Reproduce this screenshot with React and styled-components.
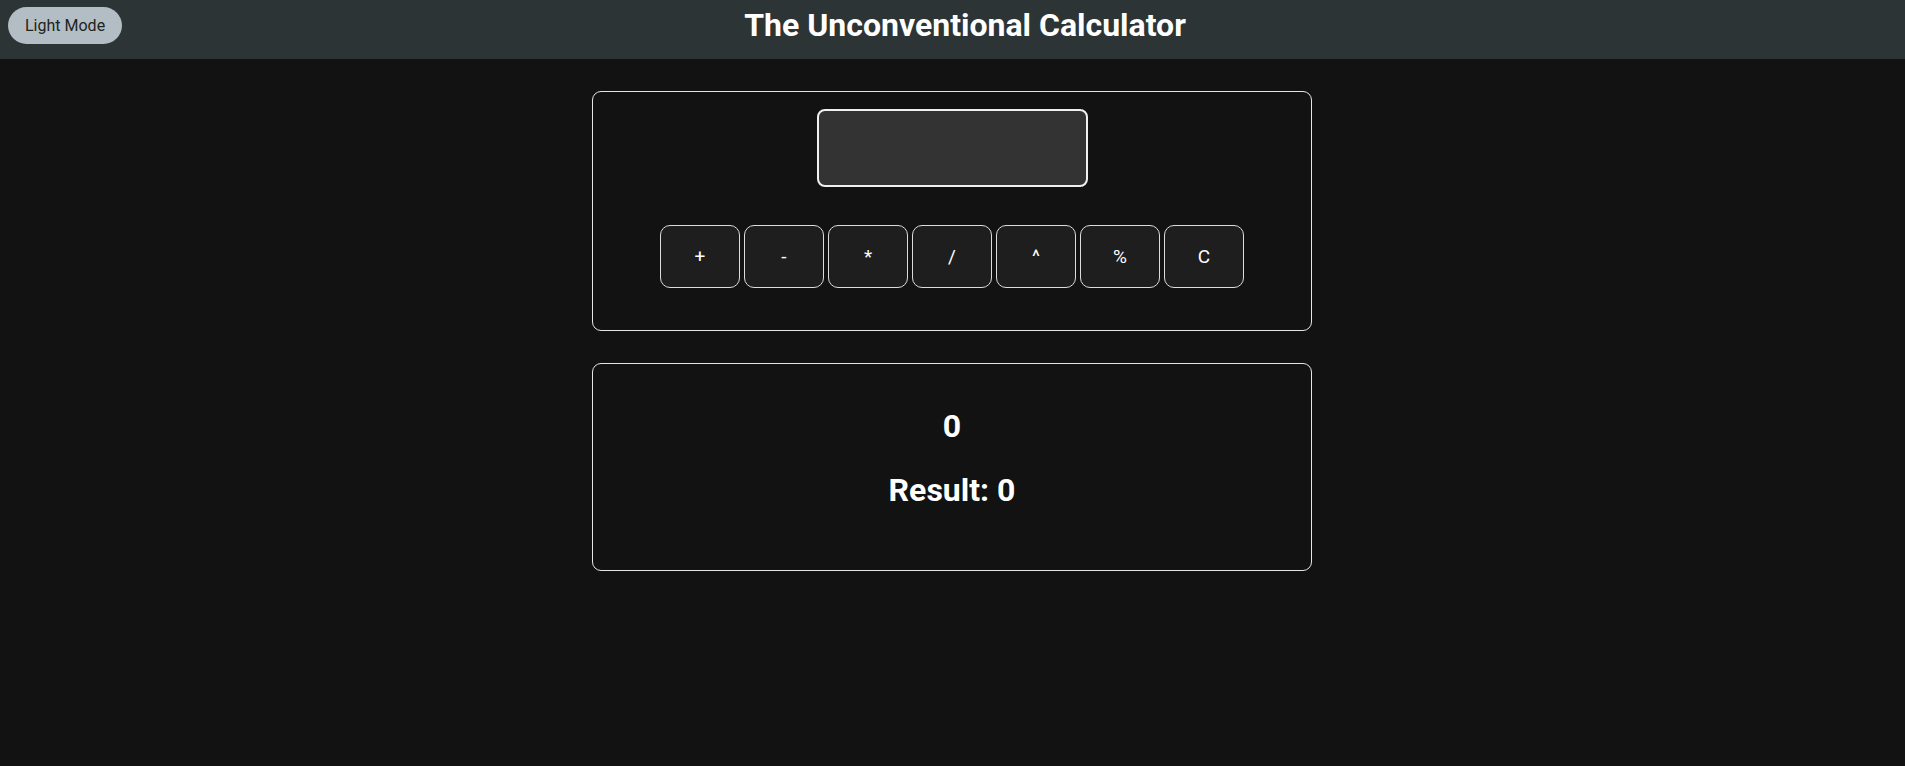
import React, { useState } from "react";
import styled, { createGlobalStyle } from "styled-components";

const GlobalStyle = createGlobalStyle`
  * {
    box-sizing: border-box;
  }
  body {
    margin: 0;
    background-color: #121212;
    font-family: Roboto, "Liberation Sans", Arial, sans-serif;
    color: #fff;
  }
`;

const Header = styled.header`
  display: grid;
  grid-template-columns: auto 1fr;
  align-items: center;
  height: 59px;
  padding: 6px 8px 16px;
  background-color: #2d3436;
`;

const ModeButton = styled.button`
  height: 37px;
  padding: 0 17px;
  border: none;
  border-radius: 19px;
  background-color: #b2bec3;
  color: #1e2324;
  font-family: Roboto, "Liberation Sans", Arial, sans-serif;
  font-size: 16px;
  cursor: pointer;
`;

const Title = styled.h1`
  margin: 0;
  padding-right: 89px;
  text-align: center;
  font-size: 32px;
  font-weight: 700;
  color: #fff;
`;

const Main = styled.main`
  display: flex;
  flex-direction: column;
  align-items: center;
  gap: 32px;
  padding: 32px 1px 0 0;
`;

const Card = styled.section`
  display: flex;
  flex-direction: column;
  align-items: center;
  width: 720px;
  border: 1px solid #e6e6e6;
  border-radius: 9px;
  background-color: #121212;
`;

const InputCard = styled(Card)`
  padding: 17px 0 42px;
  gap: 38px;
`;

const ResultCard = styled(Card)`
  padding: 44px 0 61px;
  gap: 27px;
`;

const Display = styled.input`
  width: 271px;
  height: 78px;
  padding: 0 12px;
  border: 2px solid #f0f0f0;
  border-radius: 8px;
  background-color: #333;
  color: #fff;
  font-family: Roboto, "Liberation Sans", Arial, sans-serif;
  font-size: 20px;
  outline: none;
`;

const KeyRow = styled.div`
  display: flex;
  gap: 4px;
`;

const Key = styled.button`
  width: 80px;
  height: 63px;
  border: 1px solid #dcdcdc;
  border-radius: 10px;
  background-color: #1e1e1e;
  color: #fff;
  font-family: Roboto, "Liberation Sans", Arial, sans-serif;
  font-size: 19px;
  cursor: pointer;
`;

const Value = styled.h2`
  margin: 0;
  font-size: 32px;
  line-height: 37px;
  font-weight: 700;
  color: #fff;
`;

const operators = ["+", "-", "*", "/", "^", "%", "C"];

export default function App() {
  const [input, setInput] = useState("");
  const [current, setCurrent] = useState(0);
  const [result, setResult] = useState(0);

  const apply = (op) => {
    const n = parseFloat(input) || 0;
    let next = result;
    if (op === "+") next = result + n;
    if (op === "-") next = result - n;
    if (op === "*") next = result * n;
    if (op === "/") next = n === 0 ? result : result / n;
    if (op === "^") next = Math.pow(result, n);
    if (op === "%") next = n === 0 ? result : result % n;
    if (op === "C") {
      next = 0;
      setCurrent(0);
    } else {
      setCurrent(n);
    }
    setResult(next);
    setInput("");
  };

  return (
    <>
      <GlobalStyle />
      <Header>
        <ModeButton>Light Mode</ModeButton>
        <Title>The Unconventional Calculator</Title>
      </Header>
      <Main>
        <InputCard>
          <Display
            type="number"
            value={input}
            onChange={(e) => setInput(e.target.value)}
          />
          <KeyRow>
            {operators.map((op) => (
              <Key key={op} onClick={() => apply(op)}>
                {op}
              </Key>
            ))}
          </KeyRow>
        </InputCard>
        <ResultCard>
          <Value>{current}</Value>
          <Value>Result: {result}</Value>
        </ResultCard>
      </Main>
    </>
  );
}
